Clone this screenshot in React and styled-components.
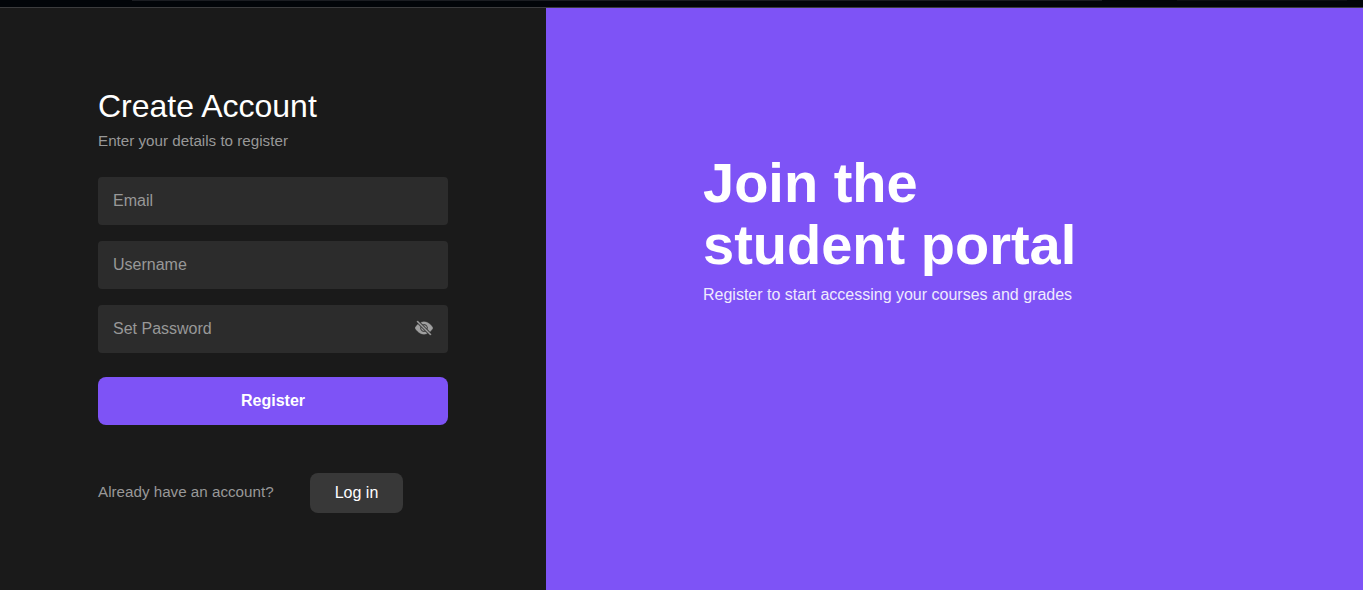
import React, { useState } from 'react';
import styled, { createGlobalStyle } from 'styled-components';
import { BsEyeSlashFill, BsEyeFill } from 'react-icons/bs';

const App = () => {
  const [form, setForm] = useState({ email: '', username: '', password: '' });
  const [showPassword, setShowPassword] = useState(false);

  const handleChange = event => {
    setForm({ ...form, [event.target.name]: event.target.value });
  };

  const handleSubmit = event => {
    event.preventDefault();
  };

  return (
    <>
      <GlobalStyle />
      <Page>
        <TopBar>
          <TopBarLine $width={970} $color="#1b1d22" />
          <TopBarLine $width={170} $color="#0d0f13" />
        </TopBar>
        <Content>
          <FormPanel>
            <Form onSubmit={handleSubmit}>
              <Title>Create Account</Title>
              <Subtitle>Enter your details to register</Subtitle>
              <Field>
                <input type="email" name="email" placeholder="Email" value={form.email} onChange={handleChange} />
              </Field>
              <Field>
                <input type="text" name="username" placeholder="Username" value={form.username} onChange={handleChange} />
              </Field>
              <Field>
                <input
                  type={showPassword ? 'text' : 'password'}
                  name="password"
                  placeholder="Set Password"
                  value={form.password}
                  onChange={handleChange}
                />
                <EyeButton type="button" aria-label="Toggle password" onClick={() => setShowPassword(!showPassword)}>
                  {showPassword ? <BsEyeFill size={18} /> : <BsEyeSlashFill size={18} />}
                </EyeButton>
              </Field>
              <RegisterButton type="submit">Register</RegisterButton>
              <LoginRow>
                <LoginText>Already have an account?</LoginText>
                <LoginButton type="button">Log in</LoginButton>
              </LoginRow>
            </Form>
          </FormPanel>
          <Banner>
            <BannerTitle>
              Join the
              <br />
              student portal
            </BannerTitle>
            <BannerText>Register to start accessing your courses and grades</BannerText>
          </Banner>
        </Content>
      </Page>
    </>
  );
};

const GlobalStyle = createGlobalStyle`
  * {
    box-sizing: border-box;
  }

  body {
    margin: 0;
    font-family: "Liberation Sans", Arial, sans-serif;
    font-size: 16px;
    background-color: #1a1a1a;
  }

  input,
  button {
    font-family: inherit;
  }
`;

const Page = styled.div`
  display: flex;
  flex-direction: column;
  height: 100vh;
  overflow: hidden;
`;

const TopBar = styled.div`
  display: flex;
  flex: 0 0 8px;
  gap: 75px;
  padding-left: 132px;
  background-color: #020509;
  border-bottom: 1px solid #3c3c3e;
`;

const TopBarLine = styled.div`
  width: ${props => props.$width}px;
  height: 1px;
  background-color: ${props => props.$color};
`;

const Content = styled.main`
  display: flex;
  flex: 1;
`;

const FormPanel = styled.section`
  flex: 0 0 546px;
  padding: 80px 98px 0;
  background-color: #1a1a1a;
`;

const Form = styled.form`
  display: flex;
  flex-direction: column;
`;

const Title = styled.h1`
  margin: 0;
  color: #fff;
  font-size: 32px;
  font-weight: 400;
  line-height: 36px;
`;

const Subtitle = styled.p`
  margin: 7px 0 27px;
  color: #989898;
  font-size: 15.2px;
  line-height: 19px;
`;

const Field = styled.div`
  display: flex;
  align-items: center;
  height: 48px;
  margin-bottom: 16px;
  border-radius: 4px;
  background-color: #2c2c2c;

  input {
    flex: 1;
    min-width: 0;
    height: 100%;
    padding: 0 15px;
    border: none;
    outline: none;
    background: transparent;
    color: #fff;
    font-size: 16px;
  }

  input::placeholder {
    color: #989898;
  }
`;

const EyeButton = styled.button`
  display: flex;
  margin: 0 15px 2px 0;
  padding: 0;
  border: none;
  background: transparent;
  color: #a0a0a0;
  cursor: pointer;

  svg {
    stroke-width: 0.3px;
  }
`;

const RegisterButton = styled.button`
  height: 48px;
  margin-top: 8px;
  border: none;
  border-radius: 8px;
  background-color: #7e53f6;
  color: #fff;
  font-size: 16px;
  font-weight: 700;
  cursor: pointer;
`;

const LoginRow = styled.div`
  display: flex;
  align-items: center;
  justify-content: space-between;
  width: 305px;
  margin-top: 48px;
`;

const LoginText = styled.span`
  padding-bottom: 3px;
  color: #989898;
  font-size: 15.2px;
`;

const LoginButton = styled.button`
  width: 93px;
  height: 40px;
  padding: 0;
  border: none;
  border-radius: 8px;
  background-color: #383838;
  color: #fff;
  font-size: 16px;
  cursor: pointer;
`;

const Banner = styled.section`
  flex: 1;
  padding: 144px 0 0 157px;
  background-color: #7e53f6;
  color: #fff;
`;

const BannerTitle = styled.h2`
  margin: 0;
  font-size: 56px;
  font-weight: 700;
  line-height: 62px;
`;

const BannerText = styled.p`
  margin: 9px 0 0;
  font-size: 16px;
  line-height: 19px;
  color: #efeafe;
`;

export default App;
